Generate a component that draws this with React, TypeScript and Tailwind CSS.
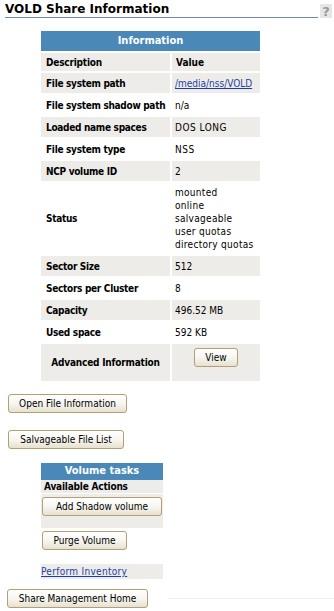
import React from 'react'

interface Row {
    label: string
    value: React.ReactNode
    shaded: boolean
    h: string
}

const Btn = ({ label, w }: { label: string; w: string }) => {
    return (
        <button
            className={`${w} h-[19px] flex items-center justify-center rounded-[3px] border border-[#b39f74] bg-gradient-to-b from-white via-[#f7f6f1] to-[#e6e1cf] text-[10px] text-black leading-none whitespace-nowrap`}
        >
            {label}
        </button>
    )
}

const App = () => {
    const rows: Row[] = [
        {
            label: 'File system path',
            value: <a className="text-[#1c3fa6] underline">/media/nss/VOLD</a>,
            shaded: true,
            h: 'h-[20px]',
        },
        { label: 'File system shadow path', value: 'n/a', shaded: false, h: 'h-[20px]' },
        { label: 'Loaded name spaces', value: <span className="tracking-[0.5px]">DOS LONG</span>, shaded: true, h: 'h-[20px]' },
        { label: 'File system type', value: <span className="tracking-[0.5px]">NSS</span>, shaded: false, h: 'h-[20px]' },
        { label: 'NCP volume ID', value: '2', shaded: true, h: 'h-[20px]' },
        {
            label: 'Status',
            value: (
                <div className="flex flex-col leading-[13px] tracking-[0.3px]">
                    <span>mounted</span>
                    <span>online</span>
                    <span>salvageable</span>
                    <span>user quotas</span>
                    <span>directory quotas</span>
                </div>
            ),
            shaded: false,
            h: 'h-[71px]',
        },
        { label: 'Sector Size', value: '512', shaded: true, h: 'h-[20px]' },
        { label: 'Sectors per Cluster', value: '8', shaded: false, h: 'h-[20px]' },
        { label: 'Capacity', value: '496.52 MB', shaded: true, h: 'h-[20px]' },
        { label: 'Used space', value: '592 KB', shaded: false, h: 'h-[20px]' },
    ]

    return (
        <div className="relative w-[334px] h-[611px] overflow-hidden bg-white text-black font-['DejaVu_Sans_Condensed','DejaVu_Sans',sans-serif]">
            {/* <!-- Title --> */}
            <div className="flex items-start pl-[5px] pt-[2px]">
                <div className="w-[313px] h-[16px] border-b border-[#6f8ba1] font-['DejaVu_Sans',sans-serif] font-bold text-[12px] leading-[14px]">
                    VOLD Share Information
                </div>
                <div className="ml-[2px] mt-[2px] w-[12px] h-[14px] bg-[#e6e6e6] flex items-center justify-center text-[#9a9a9a] font-bold text-[13px] leading-none font-['DejaVu_Sans',sans-serif]">
                    ?
                </div>
            </div>

            {/* <!-- Information table --> */}
            <table className="ml-[39px] mt-[11px] w-[223px] table-fixed border-separate border-spacing-[2px] text-[10px] whitespace-nowrap">
                <colgroup>
                    <col className="w-[129px]" />
                    <col className="w-[88px]" />
                </colgroup>
                <tbody>
                    <tr>
                        <th colSpan={2} className="h-[20px] p-0 bg-[#4a88b8] text-white text-[11px] font-bold text-center align-middle">
                            Information
                        </th>
                    </tr>
                    <tr>
                        <th className="h-[18px] p-0 pl-[5px] bg-[#edece8] text-left font-bold tracking-[-0.2px]">Description</th>
                        <th className="h-[18px] p-0 pl-[4px] bg-[#edece8] text-left font-bold">Value</th>
                    </tr>
                    {rows.map((r) => (
                        <tr key={r.label}>
                            <td className={`${r.h} p-0 pl-[5px] font-bold align-middle tracking-[-0.3px] ${r.shaded ? 'bg-[#edece8]' : ''}`}>
                                {r.label}
                            </td>
                            <td className={`${r.h} p-0 pl-[3px] align-middle ${r.shaded ? 'bg-[#edece8]' : ''}`}>
                                {r.value}
                            </td>
                        </tr>
                    ))}
                    <tr>
                        <td className="h-[37px] p-0 bg-[#edece8] font-bold text-center align-middle tracking-[-0.2px]">
                            Advanced Information
                        </td>
                        <td className="h-[37px] p-0 pt-[4px] bg-[#edece8] align-top">
                            <div className="flex justify-center">
                                <Btn label="View" w="w-[44px]" />
                            </div>
                        </td>
                    </tr>
                </tbody>
            </table>

            {/* <!-- Action buttons --> */}
            <div className="ml-[8px] mt-[11px]">
                <Btn label="Open File Information" w="w-[119px]" />
            </div>
            <div className="ml-[8px] mt-[17px]">
                <Btn label="Salvageable File List" w="w-[116px]" />
            </div>

            {/* <!-- Volume tasks --> */}
            <div className="ml-[41px] mt-[14px] w-[122px] flex flex-col">
                <div className="h-[17px] bg-[#4a88b8] text-white font-bold text-[11px] flex items-center justify-center">
                    Volume tasks
                </div>
                <div className="h-[13px] bg-[#edece8] font-bold text-[10px] leading-[13px] pl-[3px] tracking-[-0.2px]">
                    Available Actions
                </div>
                <div className="mt-[1px] h-[34px] bg-[#edece8] pt-[3px] pl-[1px]">
                    <Btn label="Add Shadow volume" w="w-[120px]" />
                </div>
                <div className="mt-[3px] pl-[1px]">
                    <Btn label="Purge Volume" w="w-[85px]" />
                </div>
                <div className="mt-[14px] h-[15px] bg-[#edece8] text-[10px] leading-[15px] tracking-[0.3px]">
                    <a className="text-[#1c3fa6] underline">Perform Inventory</a>
                </div>
            </div>

            {/* <!-- Home --> */}
            <div className="flex items-center mt-[10px]">
                <div className="ml-[7px]">
                    <Btn label="Share Management Home" w="w-[141px]" />
                </div>
                <div className="ml-[20px] flex-1 h-px bg-[#f4f2e8]" />
            </div>
        </div>
    )
}

export default App
